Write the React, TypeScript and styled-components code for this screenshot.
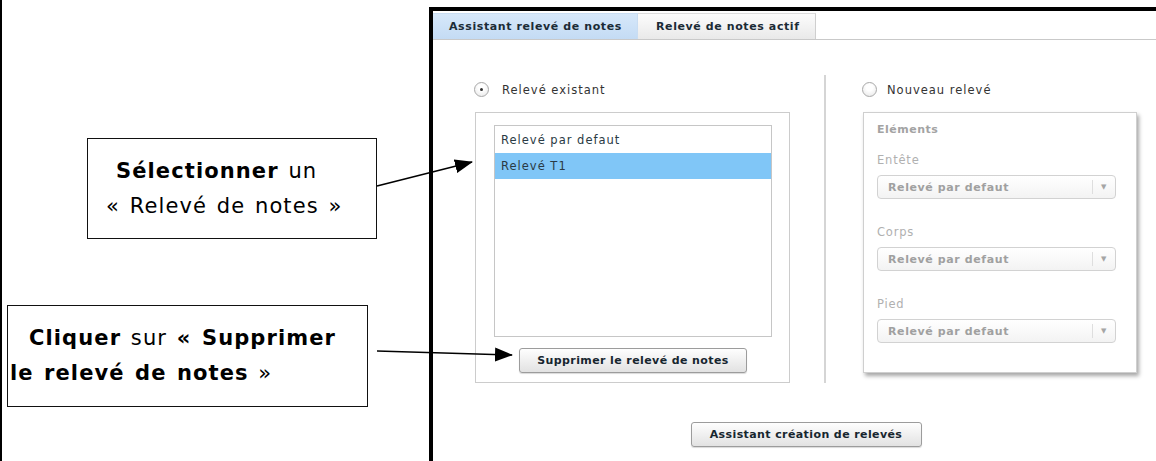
import { ReactNode } from "react";
import styled, { createGlobalStyle } from "styled-components";

const GlobalStyle = createGlobalStyle`
  html, body {
    margin: 0;
    padding: 0;
    background: #fff;
  }
  body {
    font-family: "DejaVu Sans", Verdana, sans-serif;
  }
`;

const Page = styled.div`
  position: relative;
  display: flex;
  width: 1156px;
  height: 461px;
  overflow: hidden;
  background: #fff;
`;

/* ---------- left column : annotations ---------- */

const Notes = styled.div`
  width: 429px;
  flex-shrink: 0;
  box-sizing: border-box;
  border-left: 2px solid #000;
  padding-top: 138px;
  display: flex;
  flex-direction: column;
`;

const Callout = styled.div<{ $left: number; $top: number; $w: number; $h: number; $pad: number }>`
  box-sizing: border-box;
  margin-left: ${(p) => p.$left}px;
  margin-top: ${(p) => p.$top}px;
  width: ${(p) => p.$w}px;
  height: ${(p) => p.$h}px;
  border: 1.5px solid #111;
  padding: 15px 0 0 ${(p) => p.$pad}px;
  font-family: "Comic Sans MS", "DejaVu Sans", sans-serif;
  font-size: 21px;
  letter-spacing: 1.1px;
  word-spacing: 2px;
  line-height: 35px;
  color: #000;
  white-space: nowrap;
`;

const CalloutLine = styled.div<{ $indent?: number }>`
  padding-left: ${(p) => p.$indent ?? 0}px;
  b {
    font-weight: bold;
  }
`;

const Overlay = styled.svg`
  position: absolute;
  top: 0;
  left: 0;
  pointer-events: none;
`;

/* ---------- right : screenshot ---------- */

const Frame = styled.div`
  flex: 1;
  margin-top: 7px;
  border-top: 4px solid #000;
  border-left: 4px solid #000;
  display: flex;
  flex-direction: column;
`;

const TabBar = styled.div`
  display: flex;
  height: 29px;
  box-sizing: border-box;
  padding-top: 2px;
  border-bottom: 1px solid #c9c9c9;
`;

const Tab = styled.div<{ $active?: boolean; $w: number }>`
  width: ${(p) => p.$w}px;
  box-sizing: border-box;
  display: flex;
  align-items: center;
  padding-left: ${(p) => (p.$active ? 16 : 18)}px;
  font-size: 11px;
  letter-spacing: 0.6px;
  font-weight: bold;
  color: #1b2b36;
  background: ${(p) =>
    p.$active
      ? "linear-gradient(#d6e8fa, #c4dbf4)"
      : "linear-gradient(#fcfcfc, #e9e9e9)"};
  border-top: 1px solid ${(p) => (p.$active ? "#c9ddf2" : "#dcdcdc")};
  border-right: 1px solid ${(p) => (p.$active ? "#c9ddf2" : "#cfcfcf")};
`;

const Content = styled.div`
  padding: 35px 0 0 42px;
`;

const Inner = styled.div`
  width: 662px;
  display: flex;
  flex-direction: column;
`;

const Columns = styled.div`
  display: flex;
`;

const Column = styled.div<{ $w: number }>`
  width: ${(p) => p.$w}px;
  display: flex;
  flex-direction: column;
`;

const Separator = styled.div`
  width: 2px;
  background: #d5d5d5;
  margin: 0 37px 0 34px;
`;

const RadioRow = styled.label<{ $gap: number }>`
  display: flex;
  align-items: center;
  gap: ${(p) => p.$gap}px;
  margin: 7px 0 0 -1px;
  height: 15px;
  font-size: 11.5px;
  letter-spacing: 1px;
  color: #333;
`;

const Radio = styled.span<{ $checked?: boolean }>`
  width: 13px;
  height: 13px;
  border-radius: 50%;
  border: 1px solid #a9a9a9;
  background: radial-gradient(circle at 50% 35%, #ffffff 30%, #e4e4e4 100%);
  display: flex;
  align-items: center;
  justify-content: center;
  &::after {
    content: "";
    width: 3px;
    height: 3px;
    border-radius: 50%;
    background: ${(p) => (p.$checked ? "#333" : "transparent")};
  }
`;

const GroupBox = styled.div`
  box-sizing: border-box;
  margin-top: 15px;
  height: 271px;
  border: 1px solid #cccccc;
  padding: 12px 17px 0 18px;
  display: flex;
  flex-direction: column;
  align-items: center;
`;

const List = styled.div`
  box-sizing: border-box;
  width: 100%;
  height: 212px;
  border: 1px solid #c6c6c6;
  padding-top: 1px;
  background: #fff;
`;

const ListItem = styled.div<{ $selected?: boolean }>`
  height: 26px;
  display: flex;
  align-items: center;
  padding-left: 6px;
  font-size: 11.5px;
  letter-spacing: 1px;
  color: #2a3a44;
  background: ${(p) => (p.$selected ? "#80c6f7" : "transparent")};
`;

const Button = styled.button<{ $w: number; $top: number }>`
  width: ${(p) => p.$w}px;
  height: 25px;
  margin-top: ${(p) => p.$top}px;
  padding: 0;
  border: 1px solid #9c9c9c;
  border-radius: 3px;
  background: linear-gradient(#fefefe, #e2e2e2);
  box-shadow: 0 1px 1px rgba(0, 0, 0, 0.15);
  font-family: "DejaVu Sans", Verdana, sans-serif;
  font-size: 11px;
  letter-spacing: 0.4px;
  font-weight: bold;
  color: #17262f;
`;

const ElementsBox = styled.div`
  box-sizing: border-box;
  margin-top: 15px;
  height: 261px;
  border: 1px solid #cfcfcf;
  box-shadow: 2px 3px 4px rgba(0, 0, 0, 0.35);
  padding: 9px 20px 0 13px;
  background: #fff;
`;

const ElementsTitle = styled.div`
  font-size: 11px;
  letter-spacing: 0.5px;
  font-weight: bold;
  line-height: 16px;
  color: #a3a3a3;
`;

const Field = styled.div`
  margin-top: 26px;
  &:first-of-type {
    margin-top: 15px;
  }
`;

const FieldLabel = styled.div`
  font-size: 11.5px;
  line-height: 14px;
  letter-spacing: 0.8px;
  color: #b0b0b0;
  margin-bottom: 8px;
`;

const Select = styled.div`
  box-sizing: border-box;
  height: 24px;
  border: 1px solid #d2d2d2;
  border-radius: 4px;
  background: linear-gradient(#ffffff, #f3f3f3);
  display: flex;
  align-items: center;
  font-size: 11px;
  letter-spacing: 0.6px;
  font-weight: bold;
  color: #a0a0a0;
`;

const SelectValue = styled.span`
  flex: 1;
  padding-left: 10px;
`;

const SelectArrow = styled.span`
  width: 22px;
  height: 14px;
  border-left: 1px solid #dedede;
  display: flex;
  align-items: center;
  justify-content: center;
  font-size: 7px;
  color: #a5a5a5;
`;

const Fields = styled.div``;

function SelectField({ label }: { label: string }) {
  return (
    <Field>
      <FieldLabel>{label}</FieldLabel>
      <Select>
        <SelectValue>Relevé par defaut</SelectValue>
        <SelectArrow>▼</SelectArrow>
      </Select>
    </Field>
  );
}

function Arrow({ x1, y1, x2, y2 }: { x1: number; y1: number; x2: number; y2: number }) {
  return <line x1={x1} y1={y1} x2={x2} y2={y2} stroke="#000" strokeWidth={1.6} markerEnd="url(#head)" />;
}

function Note({ children }: { children: ReactNode }) {
  return <>{children}</>;
}

export default function App() {
  return (
    <>
      <GlobalStyle />
      <Page>
        <Notes>
          <Callout $left={85} $top={0} $w={290} $h={101} $pad={18}>
            <Note>
              <CalloutLine $indent={10}>
                <b>Sélectionner</b> un
              </CalloutLine>
              <CalloutLine>« Relevé de notes »</CalloutLine>
            </Note>
          </Callout>
          <Callout $left={5} $top={66} $w={361} $h={102} $pad={2}>
            <CalloutLine $indent={19}>
              <b>Cliquer</b> sur <b>« Supprimer</b>
            </CalloutLine>
            <CalloutLine>
              <b>le relevé de notes</b> »
            </CalloutLine>
          </Callout>
        </Notes>

        <Frame>
          <TabBar>
            <Tab $active $w={205}>Assistant relevé de notes</Tab>
            <Tab $w={178}>Relevé de notes actif</Tab>
          </TabBar>

          <Content>
            <Inner>
              <Columns>
                <Column $w={315}>
                  <RadioRow $gap={13}>
                    <Radio $checked />
                    Relevé existant
                  </RadioRow>
                  <GroupBox>
                    <List>
                      <ListItem>Relevé par defaut</ListItem>
                      <ListItem $selected>Relevé T1</ListItem>
                    </List>
                    <Button $w={228} $top={11}>Supprimer le relevé de notes</Button>
                  </GroupBox>
                </Column>

                <Separator />

                <Column $w={274}>
                  <RadioRow $gap={10}>
                    <Radio />
                    Nouveau relevé
                  </RadioRow>
                  <ElementsBox>
                    <ElementsTitle>Eléments</ElementsTitle>
                    <Fields>
                      <SelectField label="Entête" />
                      <SelectField label="Corps" />
                      <SelectField label="Pied" />
                    </Fields>
                  </ElementsBox>
                </Column>
              </Columns>
              <Button $w={231} $top={39} style={{ alignSelf: "center" }}>
                Assistant création de relevés
              </Button>
            </Inner>
          </Content>
        </Frame>

        <Overlay width={1156} height={461} viewBox="0 0 1156 461">
          <defs>
            <marker id="head" markerWidth="18" markerHeight="14" refX="17" refY="7" orient="auto" markerUnits="userSpaceOnUse">
              <path d="M0,0 L18,7 L0,14 Z" fill="#000" />
            </marker>
          </defs>
          <Arrow x1={377} y1={186} x2={472} y2={162} />
          <Arrow x1={377} y1={351} x2={512} y2={355} />
        </Overlay>
      </Page>
    </>
  );
}
